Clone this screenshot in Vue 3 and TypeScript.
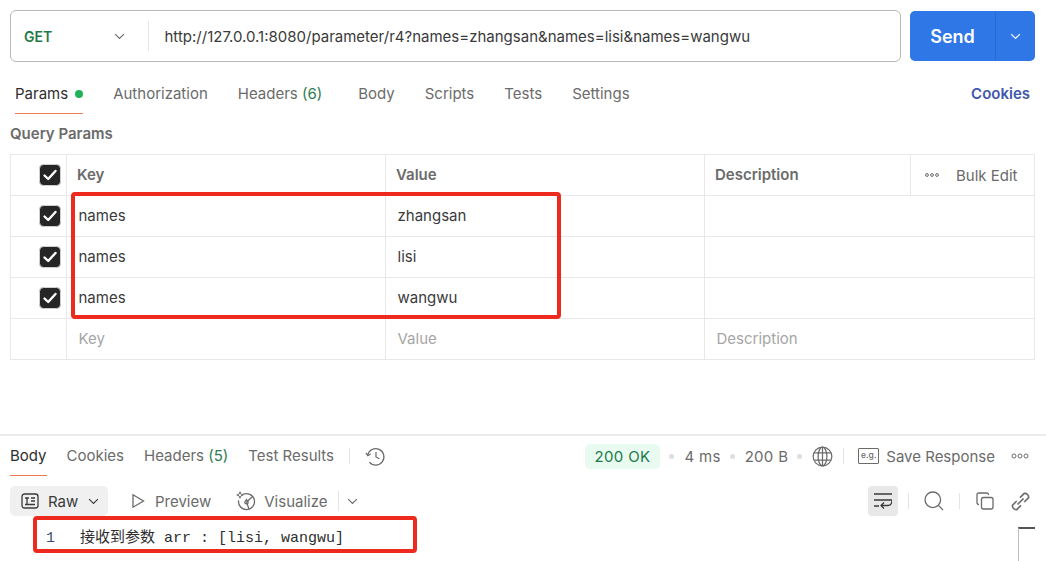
<script setup lang="ts">
const tabs = [
  { label: 'Authorization' },
  { label: 'Headers', count: '(6)' },
  { label: 'Body' },
  { label: 'Scripts' },
  { label: 'Tests' },
  { label: 'Settings' },
]
const rows = [
  { key: 'names', value: 'zhangsan' },
  { key: 'names', value: 'lisi' },
  { key: 'names', value: 'wangwu' },
]
</script>

<template>
  <div class="app">
    <section class="request">
      <div class="url-row">
        <div class="url-box">
          <span class="method">GET</span>
          <svg class="chev method-chev" viewBox="0 0 12 8"><path d="M1 1.2 6 6.2 11 1.2" /></svg>
          <span class="url-sep"></span>
          <span class="url">http://127.0.0.1:8080/parameter/r4?names=zhangsan&amp;names=lisi&amp;names=wangwu</span>
        </div>
        <div class="send">
          <span class="send-label">Send</span>
          <span class="send-more">
            <svg class="chev" viewBox="0 0 12 8"><path d="M1 1.2 6 6.2 11 1.2" /></svg>
          </span>
        </div>
      </div>

      <nav class="tabs">
        <span class="tab active">Params<i class="dot"></i></span>
        <span v-for="t in tabs" :key="t.label" class="tab" :class="{ wide: t.count }">{{ t.label }}<em v-if="t.count">&nbsp;{{ t.count }}</em></span>
        <span class="cookies">Cookies</span>
      </nav>

      <div class="qp">Query Params</div>

      <div class="table">
        <div class="row head">
          <div class="cell check">
            <svg class="cb" viewBox="0 0 22 22"><rect x="0.5" y="0.5" width="21" height="21" rx="4" /><path d="M5.5 11.5 9.2 15 16.5 7" /></svg>
          </div>
          <div class="cell">Key</div>
          <div class="cell">Value</div>
          <div class="cell desc-split">
            <span class="desc-title">Description</span>
            <span class="bulk">
              <svg class="dots small" viewBox="0 0 14 4"><circle cx="2" cy="2" r="1.4" /><circle cx="7" cy="2" r="1.4" /><circle cx="12" cy="2" r="1.4" /></svg>
              Bulk Edit
            </span>
          </div>
        </div>
        <div v-for="(r, i) in rows" :key="i" class="row">
          <div class="cell check">
            <svg class="cb" viewBox="0 0 22 22"><rect x="0.5" y="0.5" width="21" height="21" rx="4" /><path d="M5.5 11.5 9.2 15 16.5 7" /></svg>
          </div>
          <div class="cell val">{{ r.key }}</div>
          <div class="cell val">{{ r.value }}</div>
          <div class="cell"></div>
        </div>
        <div class="row last">
          <div class="cell check"></div>
          <div class="cell val ph">Key</div>
          <div class="cell val ph">Value</div>
          <div class="cell val ph">Description</div>
        </div>
        <div class="mark mark-params"></div>
      </div>
    </section>

    <section class="response">
      <div class="res-head">
        <span class="tab active res">Body</span>
        <span class="tab res">Cookies</span>
        <span class="tab res">Headers&nbsp;<em>(5)</em></span>
        <span class="tab res tight">Test Results</span>
        <span class="vsep"></span>
        <svg class="ico hist" viewBox="0 0 22 22"><path d="M2.8 9.6A8.6 8.6 0 1 1 4.6 16.8" /><path d="M1 7.2 2.9 10.2 6 8.4" /><path d="M11.5 6.2V11.5L15 13.4" /></svg>
        <span class="grow"></span>
        <span class="status">200 OK</span>
        <i class="bullet"></i><span class="meta">4 ms</span>
        <i class="bullet"></i><span class="meta">200 B</span>
        <i class="bullet"></i>
        <svg class="ico globe" viewBox="0 0 22 22"><circle cx="11" cy="11" r="9.8" /><ellipse cx="11" cy="11" rx="4.6" ry="9.8" /><path d="M2.4 7.2H19.6M2.4 14.8H19.6M11 1.2V20.8" /></svg>
        <span class="vsep two"></span>
        <span class="eg">e.g.</span>
        <span class="save">Save Response</span>
        <svg class="dots" viewBox="0 0 18 6"><circle cx="3" cy="3" r="2" /><circle cx="9" cy="3" r="2" /><circle cx="15" cy="3" r="2" /></svg>
      </div>

      <div class="res-tools">
        <span class="raw">
          <svg class="ico rawi" viewBox="0 0 18 18"><rect x="1" y="2" width="16" height="14" rx="2.5" /><path d="M4 6H8M6 6V12M10 6H14M10 9H14M4 12.5H14" /></svg>
          Raw
          <svg class="chev dark" viewBox="0 0 12 8"><path d="M1 1.2 6 6.2 11 1.2" /></svg>
        </span>
        <span class="mode preview">
          <svg class="ico play" viewBox="0 0 14 16"><path d="M2 1.8 12.5 8 2 14.2Z" /></svg>
          Preview
        </span>
        <span class="mode">
          <svg class="ico viz" viewBox="0 0 20 20"><path d="M7 3.4A8 8 0 1 1 2.6 9.4" /><path d="M10.5 11.2 16 6M10.5 11.2 13.2 18.4" /><path d="M8.8 11.2A1.7 1.7 0 0 0 12.2 11.2L10.5 8.6Z" /><path class="spark" d="M4 0.8 4.9 3.1 7.2 4 4.9 4.9 4 7.2 3.1 4.9 0.8 4 3.1 3.1Z" /></svg>
          Visualize
        </span>
        <span class="vsep three"></span>
        <svg class="chev viz-chev" viewBox="0 0 12 8"><path d="M1 1.2 6 6.2 11 1.2" /></svg>
        <span class="grow"></span>
        <span class="wrap-btn">
          <svg class="ico wrapi" viewBox="0 0 18 16"><path d="M0 1H18M0 7H18C18 11 17 12.5 14 12.5H7M10 9.5 7 12.5 10 15.5M0 13H5" /></svg>
        </span>
        <span class="vsep four"></span>
        <svg class="ico search" viewBox="0 0 20 20"><circle cx="8.8" cy="8.8" r="7.8" /><path d="M14.4 14.4 19 19" /></svg>
        <span class="vsep five"></span>
        <svg class="ico copy" viewBox="0 0 18 18"><rect x="5.5" y="5.5" width="11.5" height="11.5" rx="2" /><path d="M3 12.5H2.8A1.8 1.8 0 0 1 1 10.7V2.8A1.8 1.8 0 0 1 2.8 1H10.7A1.8 1.8 0 0 1 12.5 2.8V3" /></svg>
        <svg class="ico link" viewBox="1.5 1.5 15 15"><path d="M6.6 11.4 11.4 6.6M6 8.6 2.6 12A3.1 3.1 0 0 0 6 15.4L9.4 12M8.6 6 12 2.6A3.1 3.1 0 0 1 15.4 6L12 9.4" /></svg>
      </div>

      <div class="code">
        <span class="ln">1</span>
        <span class="code-text">接收到参数 arr : [lisi, wangwu]</span>
        <span class="scroll"></span>
        <div class="mark mark-code"></div>
      </div>
    </section>
  </div>
</template>

<style>
html, body { margin: 0; background: #fff; }
</style>

<style scoped>
.app {
  width: 1046px;
  height: 561px;
  overflow: hidden;
  display: flex;
  flex-direction: column;
  font-family: Inter, "Noto Sans", sans-serif;
  font-size: 15px;
  color: #6b6b6b;
  background: #fff;
}
.request { flex: 1; padding: 10px 11px 0 10px; min-height: 0; }
.url-row { display: flex; gap: 9px; }
.url-box {
  width: 891px;
  height: 52px;
  box-sizing: border-box;
  border: 1px solid #b9b9b9;
  border-radius: 6px;
  display: flex;
  align-items: center;
  padding-left: 13px;
}
.method { font-weight: 600; font-size: 14px; color: #1f7a45; width: 90px; }
.chev { width: 11px; height: 7px; fill: none; stroke: #6b6b6b; stroke-width: 1.3; }
.method-chev { margin-right: 23px; }
.url-sep { width: 1px; height: 30px; background: #e6e6e6; margin-right: 15.5px; }
.url { color: #3a3a3a; white-space: nowrap; }
.send {
  width: 125px;
  height: 50px;
  margin-top: 1px;
  background: #2f76e6;
  border-radius: 5px;
  display: flex;
  color: #fff;
}
.send-label {
  width: 85px;
  display: flex;
  align-items: center;
  justify-content: center;
  font-weight: 600;
  font-size: 18px;
  border-right: 1px solid #2a69cf;
}
.send-more { flex: 1; display: flex; align-items: center; justify-content: center; }
.send-more .chev { stroke: #fff; }

.tabs { display: flex; align-items: stretch; height: 41px; margin-top: 10px; padding: 1px 0 0 5px; box-sizing: content-box; }
.tab {
  display: flex;
  align-items: center;
  white-space: pre;
  margin-right: 30px;
  position: relative;
  line-height: 20px;
}
.tab.wide { margin-right: 36px; }
.tab em, .res em { font-style: normal; color: #2d7d52; }
.tab.active { color: #2e2e2e; }
.tab.active::after {
  content: "";
  position: absolute;
  left: 0;
  right: 0;
  bottom: 0;
  height: 1px;
  background: #ef7a4d;
}
.dot { width: 8px; height: 8px; border-radius: 50%; background: #1fb25a; margin-left: 7px; }
.cookies { margin-left: auto; margin-right: 5px; align-self: center; color: #3f57ad; font-weight: 600; font-size: 15px; }
.qp { font-weight: 600; font-size: 15px; margin-top: 11px; height: 29px; line-height: 18px; color: #6b6b6b; }

.table {
  width: 1025px;
  border-top: 1px solid #e8e8e8;
  border-left: 1px solid #e8e8e8;
  border-right: 1px solid #e8e8e8;
  position: relative;
  box-sizing: border-box;
}
.row {
  display: grid;
  grid-template-columns: 56px 319px 319px 1fr;
  height: 41px;
  box-sizing: border-box;
  border-bottom: 1px solid #e8e8e8;
}
.cell {
  display: flex;
  align-items: center;
  border-right: 1px solid #e8e8e8;
  padding-left: 10px;
  min-width: 0;
}
.cell:last-child { border-right: 0; }
.head .cell { font-weight: 600; font-size: 15px; padding-bottom: 1px; }
.head .desc-split { padding: 0; }
.desc-title { width: 206px; box-sizing: border-box; padding-left: 10px; height: 100%; display: flex; align-items: center; border-right: 1px solid #e8e8e8; padding-bottom: 1px; }
.bulk { display: flex; align-items: center; font-weight: 400; font-size: 15px; padding-left: 14px; gap: 17px; }
.check { justify-content: flex-end; padding: 0 5px 0 0; }
.cb { width: 22px; height: 22px; fill: #262626; stroke: #cfcfcf; stroke-width: 1; }
.cb path { fill: none; stroke: #fff; stroke-width: 2.4; stroke-linecap: round; stroke-linejoin: round; }
.val { color: #3a3a3a; padding-left: 11.5px; font-size: 15px; padding-bottom: 1px; }
.last .val { padding-bottom: 2px; }
.ph, .last .ph { color: #a6a6a6; }
.dots { width: 18px; height: 6px; fill: none; stroke: #6b6b6b; stroke-width: 1; flex: none; }
.dots.small { width: 14px; height: 4px; }

.mark { position: absolute; border: 4px solid #ee2a1e; border-radius: 4px; box-sizing: border-box; pointer-events: none; }
.mark-params { left: 60px; top: 37px; width: 490px; height: 127px; }

.response { height: 127px; flex: none; border-top: 2px solid #ececec; box-sizing: border-box; position: relative; }
.res-head { display: flex; align-items: stretch; height: 40px; padding: 0 17px 0 10px; box-sizing: border-box; }
.tab.res { margin-right: 20px; }
.tab.res.tight { margin-right: 15px; }
.grow { flex: 1; }
.vsep { width: 1px; height: 16px; background: #e4e4e4; align-self: center; flex: none; }
.ico { fill: none; stroke: #6b6b6b; stroke-width: 1.3; flex: none; }
.hist { width: 21px; height: 21px; align-self: center; margin-left: 15px; }
.status {
  align-self: center;
  background: #e9fbf0;
  color: #22794a;
  border-radius: 5px;
  height: 25px;
  line-height: 25px;
  padding: 0 10px;
  letter-spacing: 0.35px;
}
.bullet { width: 5px; height: 5px; border-radius: 50%; background: #dedede; align-self: center; margin: 0 10px 0 9px; }
.meta { align-self: center; white-space: nowrap; letter-spacing: 0.3px; }
.globe { width: 21px; height: 21px; align-self: center; }
.vsep.two { margin: 0 14px 0 10px; }
.eg {
  align-self: center;
  width: 19px;
  height: 14px;
  border: 1px solid #6b6b6b;
  border-radius: 1px;
  font-size: 8.5px;
  line-height: 13px;
  text-align: center;
  margin-right: 7px;
  font-weight: 500;
}
.save { align-self: center; white-space: nowrap; margin-right: 16px; }
.res-head .dots { align-self: center; }

.res-tools { display: flex; align-items: center; height: 30px; margin-top: 10px; padding: 0 16px 0 10px; font-size: 15px; }
.raw {
  display: flex;
  align-items: center;
  background: #f0f0f0;
  border-radius: 5px;
  height: 30px;
  width: 98px;
  box-sizing: border-box;
  padding-left: 11px;
  color: #3a3a3a;
}
.rawi { width: 18px; height: 18px; stroke: #3a3a3a; margin-right: 9px; }
.chev.dark { stroke: #3a3a3a; margin-left: 10px; }
.mode { display: flex; align-items: center; }
.preview { margin-left: 23px; margin-right: 25px; }
.play { width: 14px; height: 16px; margin-right: 10px; }
.viz { width: 20px; height: 20px; margin-right: 8px; }
.spark { stroke-width: 1; }
.vsep.three { height: 20px; margin: 0 8px 0 10px; }
.viz-chev { margin-left: 0; }
.wrap-btn { width: 30px; height: 30px; background: #e8e8e8; border-radius: 4px; display: flex; align-items: center; justify-content: center; }
.wrapi { width: 18px; height: 16px; stroke: #3a3a3a; }
.vsep.four { margin: 0 15px 0 10px; }
.search { width: 20px; height: 20px; }
.vsep.five { margin: 0 16px 0 15px; }
.copy { width: 18px; height: 18px; }
.link { width: 19px; height: 19px; margin-left: 17px; }

.code { position: relative; height: 45px; padding-top: 13px; box-sizing: border-box; display: flex; align-items: baseline; font-family: "Liberation Mono", "Noto Sans CJK SC", monospace; font-size: 15px; line-height: 20px; color: #2e2e2e; }
.ln { width: 80px; box-sizing: border-box; padding-left: 46px; color: #3c4a7d; }
.code-text { white-space: pre; }
.scroll { position: absolute; left: 1018px; top: 11px; width: 17px; height: 34px; border-left: 1px solid #bdbdbd; border-top: 2px solid #555; box-sizing: border-box; }
.mark-code { left: 33px; top: 0; width: 384px; height: 37px; }
</style>
